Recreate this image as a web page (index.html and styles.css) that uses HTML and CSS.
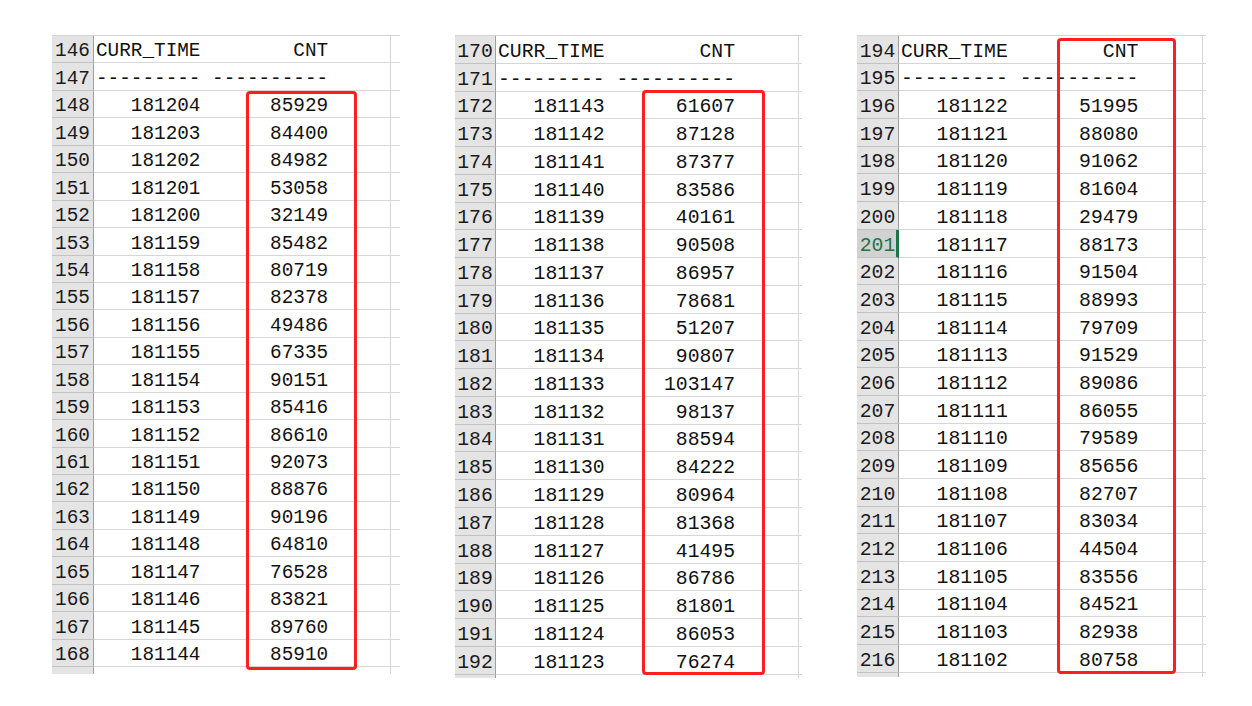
FILE: index.html
```html
<!DOCTYPE html>
<html>
<head>
<meta charset="utf-8">
<title>CURR_TIME CNT</title>
<link rel="stylesheet" href="styles.css">
</head>
<body>
<div class="sheets">

  <div class="panel p1">
    <div class="grid">
      <div class="rh">146</div><div class="cell">CURR_TIME        CNT</div><div class="stub"></div>
      <div class="rh">147</div><div class="cell">--------- ----------</div><div class="stub"></div>
      <div class="rh">148</div><div class="cell">   181204      85929</div><div class="stub"></div>
      <div class="rh">149</div><div class="cell">   181203      84400</div><div class="stub"></div>
      <div class="rh">150</div><div class="cell">   181202      84982</div><div class="stub"></div>
      <div class="rh">151</div><div class="cell">   181201      53058</div><div class="stub"></div>
      <div class="rh">152</div><div class="cell">   181200      32149</div><div class="stub"></div>
      <div class="rh">153</div><div class="cell">   181159      85482</div><div class="stub"></div>
      <div class="rh">154</div><div class="cell">   181158      80719</div><div class="stub"></div>
      <div class="rh">155</div><div class="cell">   181157      82378</div><div class="stub"></div>
      <div class="rh">156</div><div class="cell">   181156      49486</div><div class="stub"></div>
      <div class="rh">157</div><div class="cell">   181155      67335</div><div class="stub"></div>
      <div class="rh">158</div><div class="cell">   181154      90151</div><div class="stub"></div>
      <div class="rh">159</div><div class="cell">   181153      85416</div><div class="stub"></div>
      <div class="rh">160</div><div class="cell">   181152      86610</div><div class="stub"></div>
      <div class="rh">161</div><div class="cell">   181151      92073</div><div class="stub"></div>
      <div class="rh">162</div><div class="cell">   181150      88876</div><div class="stub"></div>
      <div class="rh">163</div><div class="cell">   181149      90196</div><div class="stub"></div>
      <div class="rh">164</div><div class="cell">   181148      64810</div><div class="stub"></div>
      <div class="rh">165</div><div class="cell">   181147      76528</div><div class="stub"></div>
      <div class="rh">166</div><div class="cell">   181146      83821</div><div class="stub"></div>
      <div class="rh">167</div><div class="cell">   181145      89760</div><div class="stub"></div>
      <div class="rh">168</div><div class="cell">   181144      85910</div><div class="stub"></div>
      <div class="rh tail"></div><div class="cell tail"></div><div class="stub tail"></div>
    </div>
    <div class="mark"></div>
  </div>

  <div class="panel p2">
    <div class="grid">
      <div class="rh">170</div><div class="cell">CURR_TIME        CNT</div><div class="stub"></div>
      <div class="rh">171</div><div class="cell">--------- ----------</div><div class="stub"></div>
      <div class="rh">172</div><div class="cell">   181143      61607</div><div class="stub"></div>
      <div class="rh">173</div><div class="cell">   181142      87128</div><div class="stub"></div>
      <div class="rh">174</div><div class="cell">   181141      87377</div><div class="stub"></div>
      <div class="rh">175</div><div class="cell">   181140      83586</div><div class="stub"></div>
      <div class="rh">176</div><div class="cell">   181139      40161</div><div class="stub"></div>
      <div class="rh">177</div><div class="cell">   181138      90508</div><div class="stub"></div>
      <div class="rh">178</div><div class="cell">   181137      86957</div><div class="stub"></div>
      <div class="rh">179</div><div class="cell">   181136      78681</div><div class="stub"></div>
      <div class="rh">180</div><div class="cell">   181135      51207</div><div class="stub"></div>
      <div class="rh">181</div><div class="cell">   181134      90807</div><div class="stub"></div>
      <div class="rh">182</div><div class="cell">   181133     103147</div><div class="stub"></div>
      <div class="rh">183</div><div class="cell">   181132      98137</div><div class="stub"></div>
      <div class="rh">184</div><div class="cell">   181131      88594</div><div class="stub"></div>
      <div class="rh">185</div><div class="cell">   181130      84222</div><div class="stub"></div>
      <div class="rh">186</div><div class="cell">   181129      80964</div><div class="stub"></div>
      <div class="rh">187</div><div class="cell">   181128      81368</div><div class="stub"></div>
      <div class="rh">188</div><div class="cell">   181127      41495</div><div class="stub"></div>
      <div class="rh">189</div><div class="cell">   181126      86786</div><div class="stub"></div>
      <div class="rh">190</div><div class="cell">   181125      81801</div><div class="stub"></div>
      <div class="rh">191</div><div class="cell">   181124      86053</div><div class="stub"></div>
      <div class="rh">192</div><div class="cell">   181123      76274</div><div class="stub"></div>
      <div class="rh tail"></div><div class="cell tail"></div><div class="stub tail"></div>
    </div>
    <div class="mark"></div>
  </div>

  <div class="panel p3">
    <div class="grid">
      <div class="rh">194</div><div class="cell">CURR_TIME        CNT</div><div class="stub"></div>
      <div class="rh">195</div><div class="cell">--------- ----------</div><div class="stub"></div>
      <div class="rh">196</div><div class="cell">   181122      51995</div><div class="stub"></div>
      <div class="rh">197</div><div class="cell">   181121      88080</div><div class="stub"></div>
      <div class="rh">198</div><div class="cell">   181120      91062</div><div class="stub"></div>
      <div class="rh">199</div><div class="cell">   181119      81604</div><div class="stub"></div>
      <div class="rh">200</div><div class="cell">   181118      29479</div><div class="stub"></div>
      <div class="rh active">201</div><div class="cell">   181117      88173</div><div class="stub"></div>
      <div class="rh">202</div><div class="cell">   181116      91504</div><div class="stub"></div>
      <div class="rh">203</div><div class="cell">   181115      88993</div><div class="stub"></div>
      <div class="rh">204</div><div class="cell">   181114      79709</div><div class="stub"></div>
      <div class="rh">205</div><div class="cell">   181113      91529</div><div class="stub"></div>
      <div class="rh">206</div><div class="cell">   181112      89086</div><div class="stub"></div>
      <div class="rh">207</div><div class="cell">   181111      86055</div><div class="stub"></div>
      <div class="rh">208</div><div class="cell">   181110      79589</div><div class="stub"></div>
      <div class="rh">209</div><div class="cell">   181109      85656</div><div class="stub"></div>
      <div class="rh">210</div><div class="cell">   181108      82707</div><div class="stub"></div>
      <div class="rh">211</div><div class="cell">   181107      83034</div><div class="stub"></div>
      <div class="rh">212</div><div class="cell">   181106      44504</div><div class="stub"></div>
      <div class="rh">213</div><div class="cell">   181105      83556</div><div class="stub"></div>
      <div class="rh">214</div><div class="cell">   181104      84521</div><div class="stub"></div>
      <div class="rh">215</div><div class="cell">   181103      82938</div><div class="stub"></div>
      <div class="rh">216</div><div class="cell">   181102      80758</div><div class="stub"></div>
      <div class="rh tail"></div><div class="cell tail"></div><div class="stub tail"></div>
    </div>
    <div class="mark"></div>
  </div>

</div>
</body>
</html>
```
FILE: styles.css
```css
html, body {
  margin: 0;
  padding: 0;
  background: #ffffff;
}

.sheets {
  display: flex;
  align-items: flex-start;
  padding-top: 35px;
  padding-left: 52px;
  gap: 55px;
}

.panel {
  position: relative;
  --rh-w: 42px;
  --cell-w: 296px;
  --stub-w: 10px;
  --row-h: 27.45px;
  --fs: 19.35px;
  --tail-h: 7px;
}

.p2 {
  --rh-w: 41px;
  --cell-w: 302px;
  --stub-w: 4px;
  --row-h: 27.77px;
  --fs: 19.75px;
  --tail-h: 3px;
}

.p3 {
  --rh-w: 42px;
  --cell-w: 303px;
  --stub-w: 4px;
  --row-h: 27.7px;
  --fs: 19.8px;
  --tail-h: 4px;
}

.grid {
  display: grid;
  grid-template-columns: var(--rh-w) var(--cell-w) var(--stub-w);
  grid-auto-rows: var(--row-h);
  border-top: 1px solid #d4d4d4;
  font-family: "Liberation Mono", "DejaVu Sans Mono", monospace;
  font-size: var(--fs);
  color: #111111;
}

.rh {
  box-sizing: border-box;
  background: #e4e4e4;
  border-bottom: 1px solid #c2c2c2;
  border-right: 1px solid #9e9e9e;
  display: flex;
  align-items: flex-end;
  justify-content: center;
  line-height: 20px;
  padding-bottom: 1px;
  color: #1a1a1a;
}

.rh.active {
  background: #d2d2d2;
  color: #217346;
  border-right: 3px solid #217346;
  padding-left: 2px;
}

.cell {
  box-sizing: border-box;
  border-bottom: 1px solid #d6d6d6;
  white-space: pre;
  display: flex;
  align-items: flex-end;
  line-height: 20px;
  padding-left: 2px;
  padding-bottom: 1px;
}

.stub {
  box-sizing: border-box;
  border-left: 1px solid #d6d6d6;
  border-bottom: 1px solid #d6d6d6;
}

.tail {
  height: var(--tail-h);
  border-bottom: none;
}

.cell.tail {
  border-bottom: none;
}

.stub.tail {
  border-bottom: none;
}

.mark {
  position: absolute;
  box-sizing: border-box;
  border: 3px solid #ff1f1f;
  border-radius: 4px;
  left: 194px;
  top: 56px;
  width: 111px;
  height: 579px;
}

.p2 .mark {
  left: 187px;
  top: 55px;
  width: 123px;
  height: 585px;
}

.p3 .mark {
  left: 200px;
  top: 3px;
  width: 119px;
  height: 636px;
}
```
